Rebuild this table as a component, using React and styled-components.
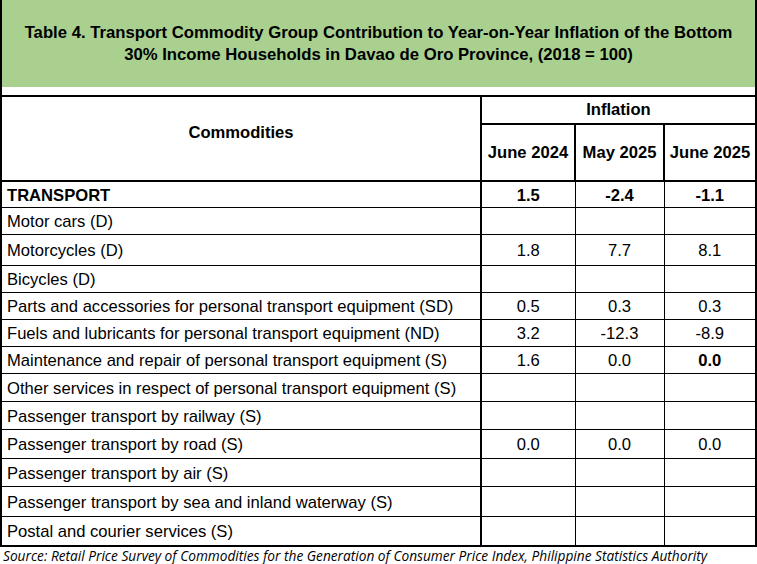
import React from "react";
import styled, { createGlobalStyle } from "styled-components";

const Global = createGlobalStyle`
  html, body { margin: 0; padding: 0; background: #ffffff; }
  body { width: 757px; height: 564px; overflow: hidden; }
`;

const Page = styled.div`
  width: 757px;
  font-family: "Liberation Sans", Arial, sans-serif;
  color: #000;
`;

const Frame = styled.div`
  box-sizing: border-box;
  border-left: 2px solid #000;
  border-right: 2px solid #000;
`;

const TitleBox = styled.div`
  height: 87px;
  background: #a9d08e;
  display: flex;
  align-items: center;
  justify-content: center;
  text-align: center;
  font-family: "Liberation Sans", Arial, sans-serif;
  font-weight: bold;
  font-size: 16.7px;
  line-height: 22px;
  padding-top: 1px;
  box-sizing: border-box;
`;

const Gap = styled.div`
  height: 8px;
  background: #fff;
`;

const Table = styled.table`
  width: 100%;
  border-collapse: collapse;
  table-layout: fixed;
  font-size: 16.6px;
`;

const HeadCell = styled.th`
  font-weight: bold;
  text-align: center;
  vertical-align: middle;
  padding: 0 0 ${(p) => p.$pb || 0}px 0;
  border-top: 2px solid #000;
  border-left: ${(p) => (p.$first ? "none" : "2px solid #000")};
  border-bottom: 2px solid #000;
  height: ${(p) => p.$h}px;
  box-sizing: border-box;
`;

const Row = styled.tr`
  height: ${(p) => p.$h}px;
`;

const NameCell = styled.td`
  padding: 3px 0 0 5px;
  text-align: left;
  font-weight: ${(p) => (p.$bold ? "bold" : "normal")};
  border-bottom: ${(p) => (p.$last ? "2px" : "1px")} solid #000;
  border-top: ${(p) => (p.$firstRow ? "2px" : "1px")} solid #000;
  white-space: nowrap;
  vertical-align: middle;
`;

const ValueCell = styled.td`
  padding: 3px 0 0 0;
  text-align: center;
  font-weight: ${(p) => (p.$bold ? "bold" : "normal")};
  border-left: ${(p) => (p.$thick ? "2px" : "1px")} solid #000;
  border-bottom: ${(p) => (p.$last ? "2px" : "1px")} solid #000;
  border-top: ${(p) => (p.$firstRow ? "2px" : "1px")} solid #000;
  vertical-align: middle;
`;

const Source = styled.div`
  padding: 1px 0 0 3px;
  font-family: "Open Sans", "Noto Sans", sans-serif;
  font-style: italic;
  font-size: 13.7px;
  line-height: 15px;
  white-space: nowrap;
`;

const rows = [
  { name: "TRANSPORT", v: ["1.5", "-2.4", "-1.1"], bold: true, h: 26 },
  { name: "Motor cars (D)", v: ["", "", ""], h: 27 },
  { name: "Motorcycles (D)", v: ["1.8", "7.7", "8.1"], h: 31 },
  { name: "Bicycles (D)", v: ["", "", ""], h: 27 },
  { name: "Parts and accessories for personal transport equipment (SD)", v: ["0.5", "0.3", "0.3"], h: 27 },
  { name: "Fuels and lubricants for personal transport equipment (ND)", v: ["3.2", "-12.3", "-8.9"], h: 27 },
  { name: "Maintenance and repair of personal transport equipment (S)", v: ["1.6", "0.0", "0.0"], boldLast: true, h: 27 },
  { name: "Other services in respect of personal transport equipment (S)", v: ["", "", ""], h: 28 },
  { name: "Passenger transport by railway (S)", v: ["", "", ""], h: 28 },
  { name: "Passenger transport by road (S)", v: ["0.0", "0.0", "0.0"], h: 29 },
  { name: "Passenger transport by air (S)", v: ["", "", ""], h: 28 },
  { name: "Passenger transport by sea and inland waterway (S)", v: ["", "", ""], h: 30 },
  { name: "Postal and courier services (S)", v: ["", "", ""], h: 30 },
];

export default function App() {
  return (
    <>
      <Global />
      <Page>
        <Frame>
          <TitleBox>
            Table 4. Transport Commodity Group Contribution to Year-on-Year Inflation of the Bottom
            <br />
            30% Income Households in Davao de Oro Province, (2018 = 100)
          </TitleBox>
          <Gap />
          <Table>
            <colgroup>
              <col style={{ width: 479 }} />
              <col style={{ width: 94 }} />
              <col style={{ width: 89 }} />
              <col style={{ width: 91 }} />
            </colgroup>
            <thead>
              <tr>
                <HeadCell rowSpan={2} $first $h={85} $pb={12}>Commodities</HeadCell>
                <HeadCell colSpan={3} $h={28}>Inflation</HeadCell>
              </tr>
              <tr>
                <HeadCell $h={57}>June 2024</HeadCell>
                <HeadCell $h={57}>May 2025</HeadCell>
                <HeadCell $h={57}>June 2025</HeadCell>
              </tr>
            </thead>
            <tbody>
              {rows.map((r, i) => (
                <Row key={r.name} $h={r.h}>
                  <NameCell $bold={r.bold} $firstRow={i === 0} $last={i === rows.length - 1}>
                    {r.name}
                  </NameCell>
                  {r.v.map((val, j) => (
                    <ValueCell
                      key={j}
                      $thick={j === 0}
                      $bold={r.bold || (r.boldLast && j === 2)}
                      $firstRow={i === 0}
                      $last={i === rows.length - 1}
                    >
                      {val}
                    </ValueCell>
                  ))}
                </Row>
              ))}
            </tbody>
          </Table>
        </Frame>
        <Source>
          Source: Retail Price Survey of Commodities for the Generation of Consumer Price Index, Philippine Statistics Authority
        </Source>
      </Page>
    </>
  );
}
